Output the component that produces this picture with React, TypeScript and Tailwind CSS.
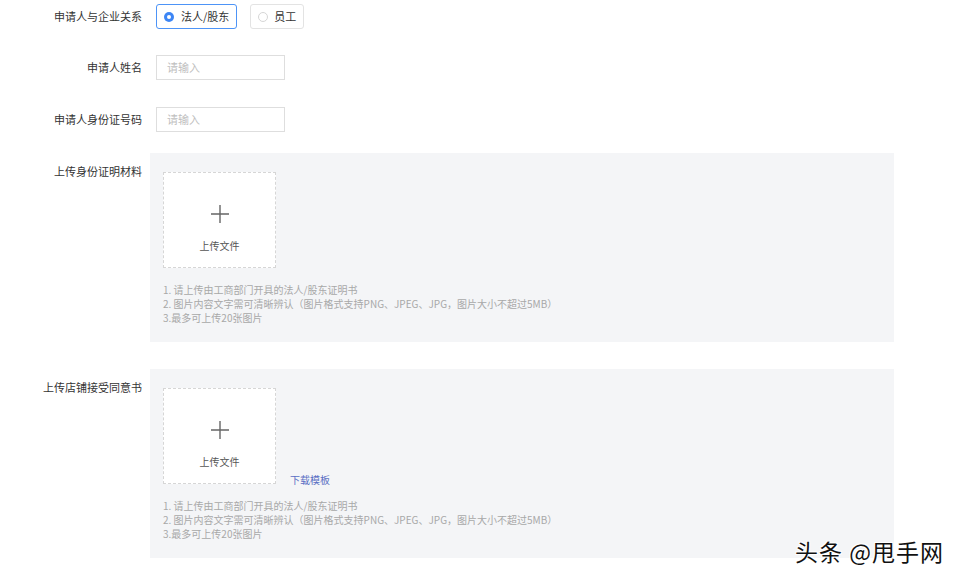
import React from 'react'

const font = { fontFamily: '"Noto Sans CJK SC", "Noto Sans", sans-serif' }

function Label({ text }: { text: string }) {
  return (
    <div className="w-[142px] shrink-0 text-right text-[11px] leading-[25px] text-[#333]">{text}</div>
  )
}

function TextInput() {
  return (
    <div className="ml-[14px] flex h-[25px] w-[129px] items-center border border-[#dedede] bg-white px-[10px] text-[11px] text-[#c0c0c0]">
      请输入
    </div>
  )
}

function Notes() {
  return (
    <div className="mt-[15px] text-[10px] leading-[14px] text-[#a8a8a8]">
      <div>1. 请上传由工商部门开具的法人/股东证明书</div>
      <div>2. 图片内容文字需可清晰辨认（图片格式支持PNG、JPEG、JPG，图片大小不超过5MB）</div>
      <div>3.最多可上传20张图片</div>
    </div>
  )
}

function UploadBox() {
  return (
    <div className="flex h-[96px] w-[113px] flex-col items-center border border-dashed border-[#d6d6d6] bg-white pt-[32px]">
      <svg width="18" height="18" viewBox="0 0 18 18">
        <path d="M9 0v18M0 9h18" stroke="#666" strokeWidth="1.4" fill="none" />
      </svg>
      <div className="mt-[16px] text-[10px] leading-[14px] text-[#555]">上传文件</div>
    </div>
  )
}

function UploadSection({ label, template }: { label: string; template?: boolean }) {
  return (
    <div className="flex">
      <div className="w-[142px] shrink-0 pt-[8px] text-right text-[11px] leading-[20px] text-[#333]">{label}</div>
      <div className="ml-[8px] h-[189px] w-[744px] bg-[#f4f5f7] pl-[13px] pt-[19px]">
        <div className="flex items-end">
          <UploadBox />
          {template && <div className="mb-[-3px] ml-[14px] text-[10px] leading-[14px] text-[#5a6fc4]">下载模板</div>}
        </div>
        <Notes />
      </div>
    </div>
  )
}

export default function App() {
  return (
    <div className="relative h-[582px] w-[964px] overflow-hidden bg-white pt-[4px]" style={font}>
      <div className="flex">
        <Label text="申请人与企业关系" />
        <div className="ml-[14px] flex h-[25px] items-center gap-[2px] rounded-[3px] border border-[#4d94f7] px-[7px] text-[11px] text-[#333]">
          <span className="flex h-[10px] w-[10px] items-center justify-center rounded-full bg-[#3d86f5]">
            <span className="h-[4px] w-[4px] rounded-full bg-white" />
          </span>
          <span className="ml-[5px]">法人/股东</span>
        </div>
        <div className="ml-[13px] flex h-[25px] items-center rounded-[3px] border border-[#e3e3e3] px-[7px] text-[11px] text-[#333]">
          <span className="h-[10px] w-[10px] rounded-full border border-[#d6d6d6]" />
          <span className="ml-[6px]">员工</span>
        </div>
      </div>
      <div className="mt-[26px] flex">
        <Label text="申请人姓名" />
        <TextInput />
      </div>
      <div className="mt-[27px] flex">
        <Label text="申请人身份证号码" />
        <TextInput />
      </div>
      <div className="mt-[21px]">
        <UploadSection label="上传身份证明材料" />
      </div>
      <div className="mt-[27px]">
        <UploadSection label="上传店铺接受同意书" template />
      </div>
      <div
        className="absolute left-[795px] top-[536px] text-[23px] leading-[30px] tracking-[1px] text-[#111]"
        style={{ textShadow: '1px 1px 0 #fff, -1px -1px 0 #fff, 1px -1px 0 #fff, -1px 1px 0 #fff' }}
      >
        头条 @甩手网
      </div>
    </div>
  )
}
